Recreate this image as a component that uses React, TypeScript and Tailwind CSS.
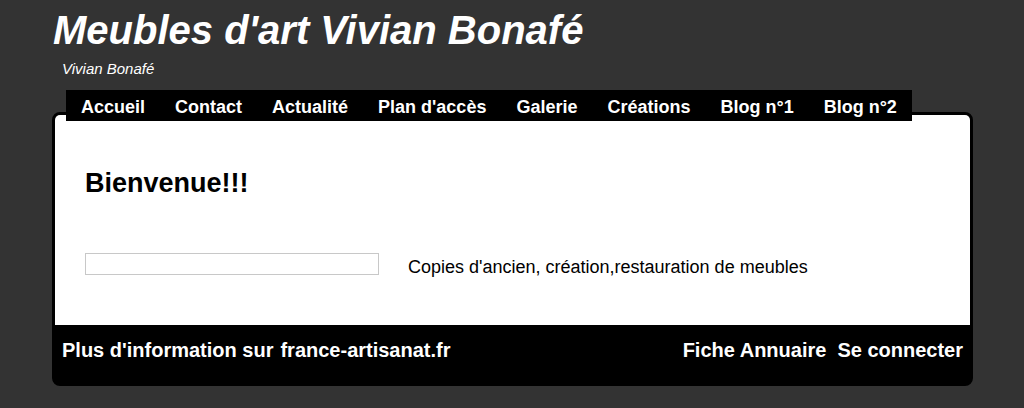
// App.tsx
const nav = ["Accueil", "Contact", "Actualité", "Plan d'accès", "Galerie", "Créations", "Blog n°1", "Blog n°2"];

export default function App() {
  return (
    <div className="min-h-[408px] bg-[#333333] font-['Liberation_Sans',Arial,sans-serif]">
      <div className="w-[922px] mx-auto pl-[2px]">
        <div className="pt-[6px] text-[40px] leading-[48px] font-bold italic text-white">
          Meubles d'art Vivian Bonafé
        </div>
        <div className="mt-[5px] pl-[9px] text-[15px] leading-[20px] italic text-white">Vivian Bonafé</div>

        <nav className="relative z-10 mt-[11px] ml-[13px] flex w-fit h-[31px] overflow-hidden bg-black">
          {nav.map((n) => (
            <a key={n} href="#" className="px-[15px] text-[18px] leading-[34px] font-bold text-white">
              {n}
            </a>
          ))}
        </nav>

        <div className="-mt-[9px] -ml-px border-[3px] border-black bg-black rounded-lg">
          <div className="bg-white rounded-t-[5px] pt-[51px] pb-[50px] pl-[30px]">
            <h1 className="text-[27px] leading-[34px] font-bold text-black">Bienvenue!!!</h1>
            <div className="mt-[53px] h-[22px] flex items-start">
              <div className="w-[294px] h-[22px] border border-[#c8c8c8]"></div>
              <p className="ml-[29px] mt-[3px] text-[18px] leading-[22px] text-black">
                Copies d'ancien, création,restauration de meubles
              </p>
            </div>
          </div>
          <div className="h-[58px] flex justify-between px-[7px] pt-[13px] text-[20px] leading-[24px] font-bold text-white">
            <div className="flex gap-[7px]">
              <span>Plus d'information sur</span>
              <a href="#">france-artisanat.fr</a>
            </div>
            <div className="flex gap-[11px]">
              <a href="#">Fiche Annuaire</a>
              <a href="#">Se connecter</a>
            </div>
          </div>
        </div>
      </div>
    </div>
  );
}
